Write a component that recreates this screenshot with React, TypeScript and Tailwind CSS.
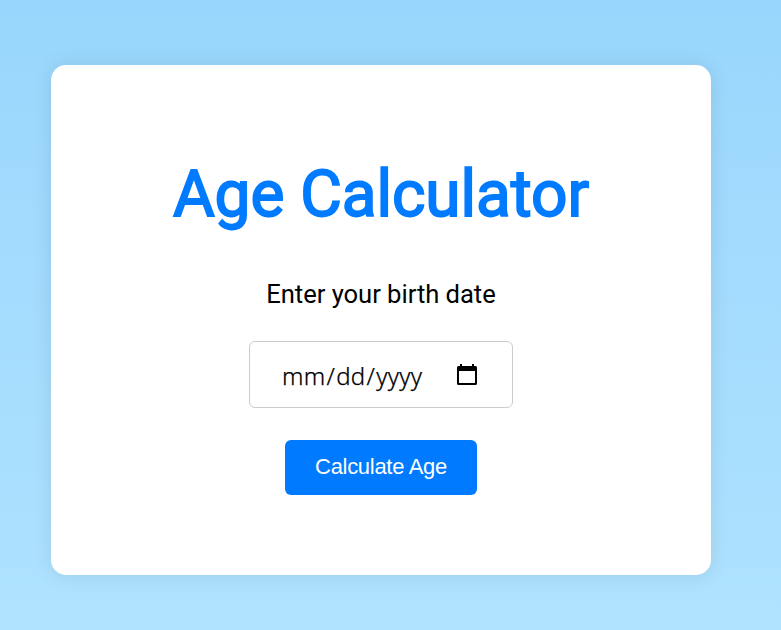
export default function App() {
  return (
    <main className="flex h-[630px] w-full justify-center bg-linear-to-b from-[#99d6fd] to-[#afe3ff] pt-[65px] pr-[19px] font-[Roboto,sans-serif]">
      <section className="flex h-[510px] w-[660px] flex-col items-center rounded-[15px] bg-white shadow-[0_0_20px_rgba(0,0,0,0.1)]">
        <h1 className="mt-[92px] whitespace-nowrap text-[64px] leading-[76px] font-normal tracking-[-0.08px] text-[#007bff] [-webkit-text-stroke:1.8px_#007bff]">Age Calculator</h1>
        <label className="mt-[46px] text-[25.6px] leading-[30px] tracking-[-0.04px] text-black">Enter your birth date</label>
        <div className="mt-[32px] flex h-[67px] w-[264px] items-center justify-between rounded-[6px] border border-[#ccc] pr-[34px] pl-[32px]">
          <span className="whitespace-nowrap pt-[3px] font-['Noto_Sans',sans-serif] text-[24px] leading-[32px] font-light tracking-[0.3px] text-black [-webkit-text-stroke:0.25px_black]">mm<span className="mx-px">/</span>dd<span className="mx-px">/</span>yyyy</span>
          <svg width="22" height="24" viewBox="0 0 22 24" fill="black"><path fillRule="evenodd" d="M4 1h2v2h10V1h2v2h1.5Q21 3 21 4.5v16Q21 22 19.500 22h-17Q1 22 1 20.500v-16Q1 3 2.500 3H4zM3 8v12h16V8z" /></svg>
        </div>
        <button className="mt-[32px] h-[55px] w-[192px] rounded-[6px] bg-[#007bff] pb-[2px] font-['Liberation_Sans',sans-serif] text-[22px] tracking-[-0.3px] text-white">Calculate Age</button>
      </section>
    </main>
  );
}
